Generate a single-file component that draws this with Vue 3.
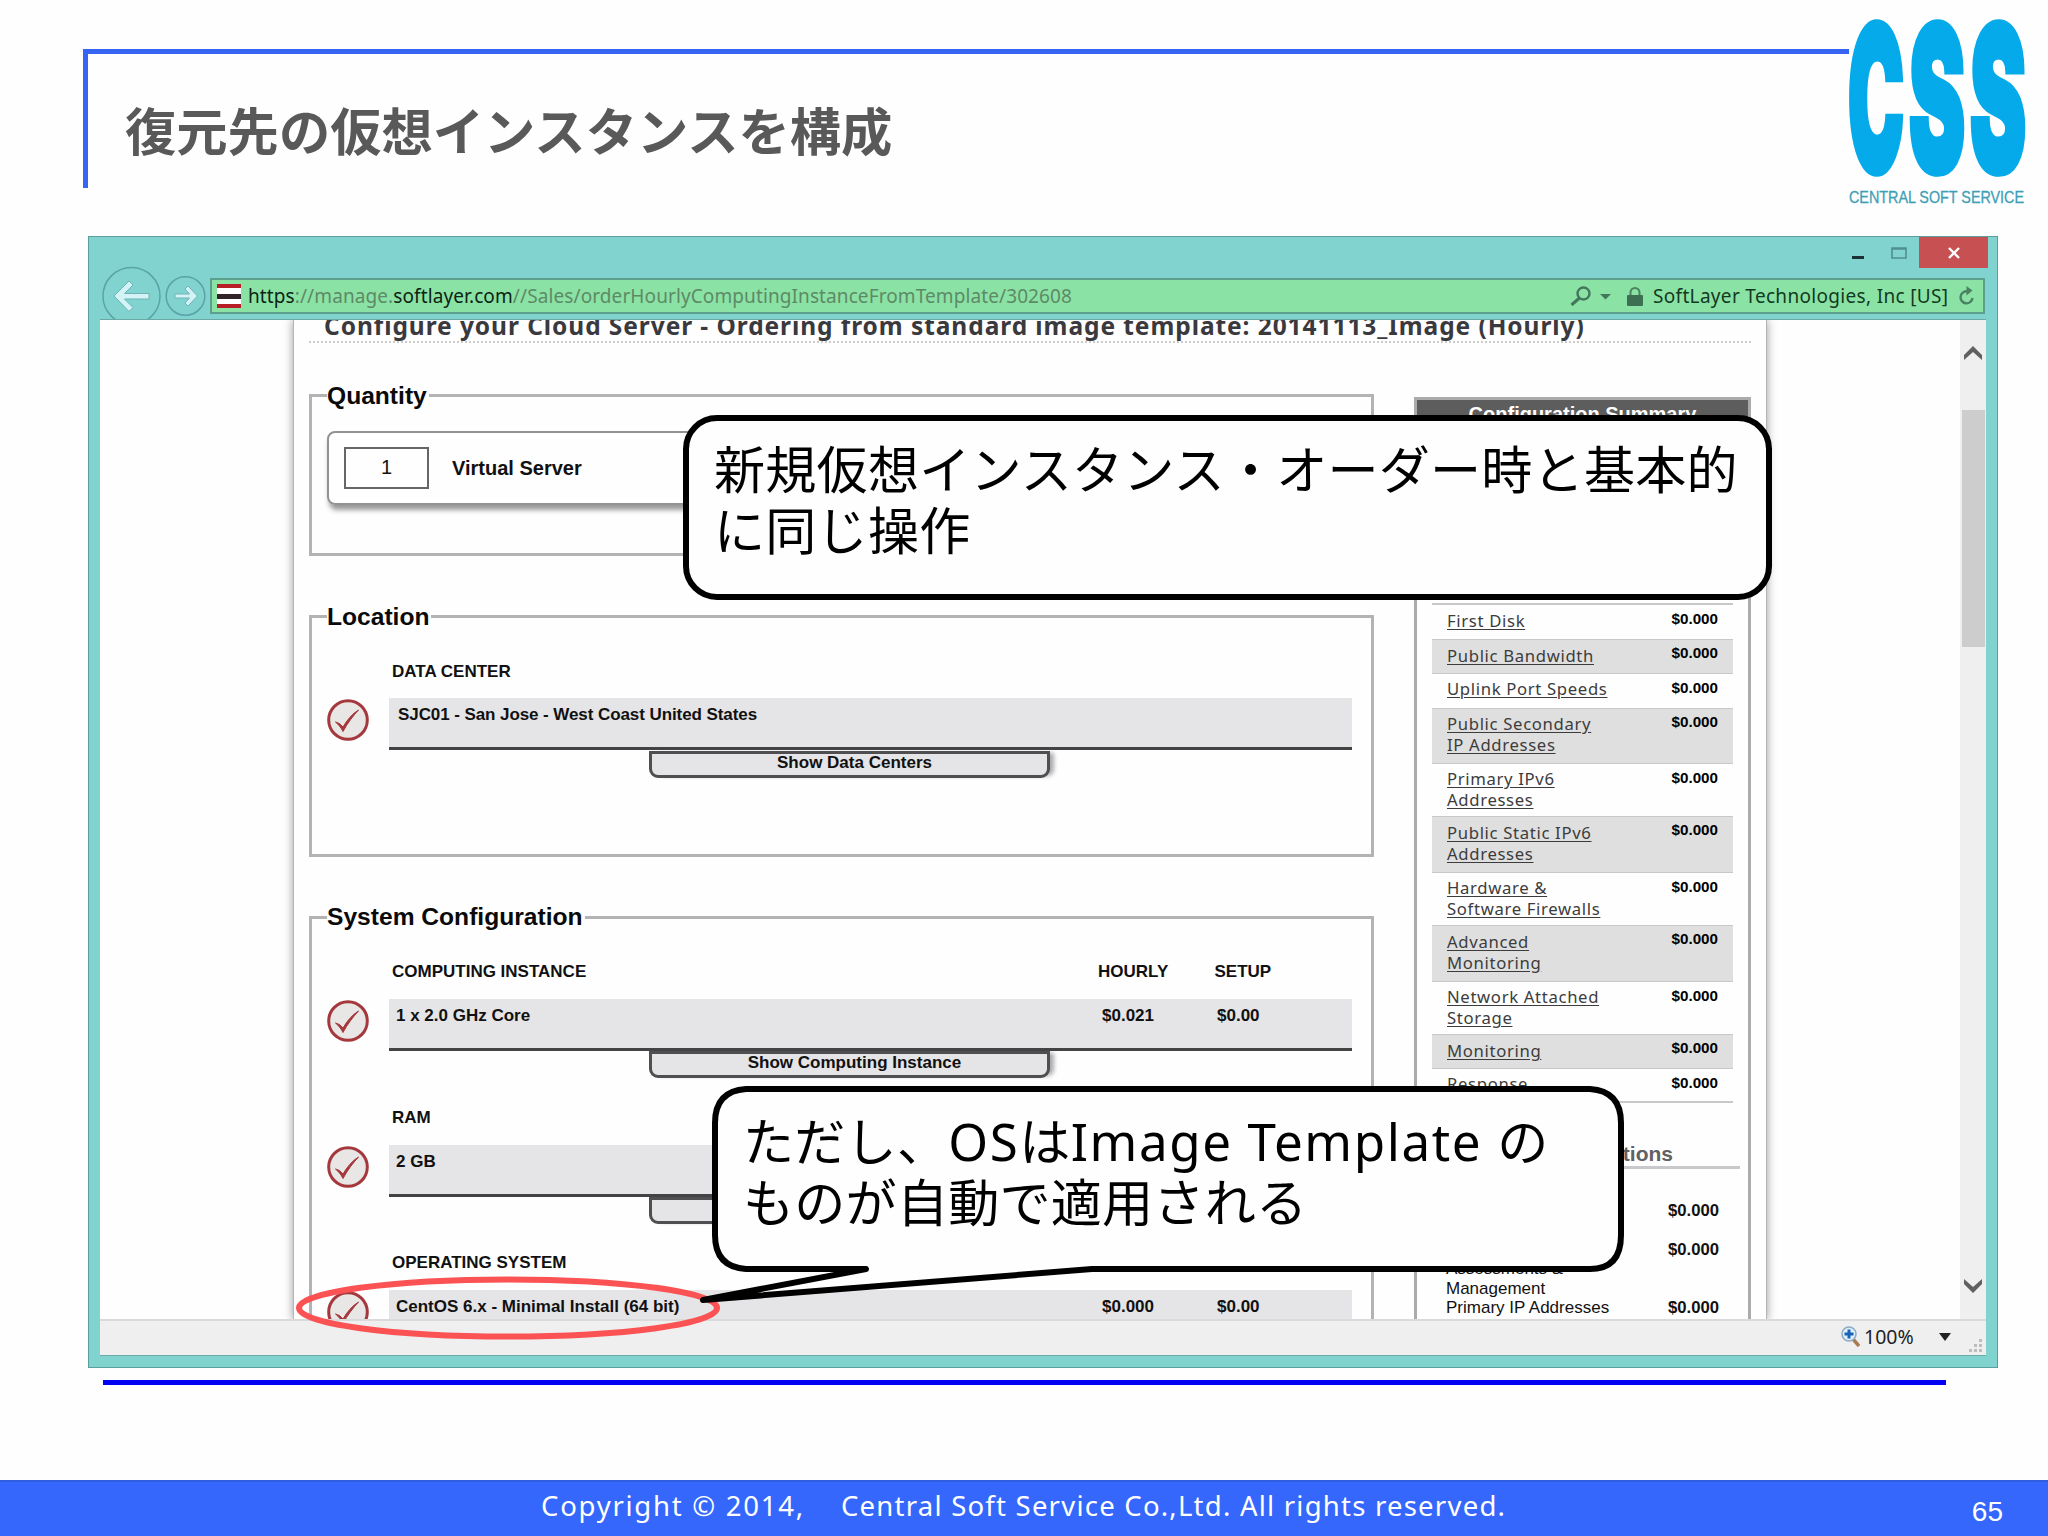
<template>
  <div class="slide">
    <header class="slide-head">
      <h1>復元先の仮想インスタンスを構成</h1>
    </header>

    <svg class="logo" viewBox="0 0 175 190" width="175" height="190">
      <g class="logo-letters" transform="scale(1 1.93)">
        <text x="-1" y="79" textLength="56" lengthAdjust="spacingAndGlyphs">C</text>
        <text x="60" y="79" textLength="56" lengthAdjust="spacingAndGlyphs">S</text>
        <text x="121" y="79" textLength="56" lengthAdjust="spacingAndGlyphs">S</text>
      </g>
      <text class="logo-name" x="0" y="184" textLength="175" lengthAdjust="spacingAndGlyphs">CENTRAL SOFT SERVICE</text>
    </svg>

    <main class="window">
      <div class="titlebar">
        <svg class="win-btn" viewBox="0 0 12 12" width="12" height="12"><path d="M0 10.5h12" stroke="#1d3034" stroke-width="3" /></svg>
        <svg class="win-btn max" viewBox="0 0 16 12" width="16" height="12"><path d="M1 1h14v10H1zM1 2h14" fill="none" stroke="#4f8f91" stroke-width="1.6" /></svg>
        <div class="close">
          <svg viewBox="0 0 12 12" width="12" height="12"><path d="M1 1l10 10M11 1L1 11" stroke="#fff" stroke-width="2.4" /></svg>
        </div>
      </div>

      <div class="navbar">
        <svg class="nav-icons" viewBox="0 0 104 53" width="104" height="53">
          <g fill="none" stroke="#5ba3a6" stroke-width="1.5">
            <circle cx="29.5" cy="30" r="28.5" />
            <circle cx="83.5" cy="30" r="19.3" />
          </g>
          <path d="M12 30l15-15 4 4-8.500 8.500h24.500v5.500H22.500l8.500 8.500-4 4z" fill="#d3f3f6" stroke="#6fb3b8" />
          <path d="M95.500 30l-9.500-10-3 3 4.500 5H73v4h14.500l-4.500 5 3 3z" fill="#d3f3f6" stroke="#6fb3b8" />
        </svg>
        <div class="address">
          <div class="favicon"></div>
          <div class="url"><b>https</b>://manage.<b>softlayer.com</b>//Sales/orderHourlyComputingInstanceFromTemplate/302608</div>
          <svg class="search" viewBox="0 0 42 20" width="42" height="20">
            <circle cx="13.500" cy="7.500" r="6" fill="none" stroke="#43765a" stroke-width="2.400" />
            <path d="M9.500 12L1.500 19" stroke="#43765a" stroke-width="3" />
            <path d="M30 8h11l-5.500 5.500z" fill="#43765a" />
          </svg>
          <svg class="lock" viewBox="0 0 16 19" width="16" height="19">
            <path d="M3.500 9V5.500a4.500 4.500 0 0 1 9 0V9" fill="none" stroke="#4b8261" stroke-width="2" />
            <rect y="8" width="16" height="11" rx="1" fill="#3d7052" />
          </svg>
          <span class="owner">SoftLayer Technologies, Inc [US]</span>
          <svg class="reload" viewBox="0 0 17 20" width="17" height="20">
            <path d="M10 5.500A6 6 0 1 0 14.500 12" fill="none" stroke="#4b8261" stroke-width="2.400" />
            <path d="M8.500 0l6 4.500-6 5z" fill="#4b8261" />
          </svg>
        </div>
      </div>

      <div class="viewport">
        <div class="page">
          <h2>Configure your Cloud Server - Ordering from standard image template: 20141113_Image (Hourly)</h2>
          <div class="columns">
            <div class="form">
              <section class="box quantity">
                <h3>Quantity</h3>
                <div class="quantity-card">
                  <div class="quantity-input">1</div>
                  <span>Virtual Server</span>
                </div>
              </section>

              <section v-for="box in boxes" :key="box.title" :class="['box', box.cls]">
                <h3>{{ box.title }}</h3>
                <div v-for="item in box.items" :key="item.label" class="group">
                  <div class="group-head">
                    <span>{{ item.label }}</span>
                    <span>{{ item.head && "HOURLY" }}</span>
                    <span>{{ item.head && "SETUP" }}</span>
                  </div>
                  <div class="group-row">
                    <svg viewBox="0 0 42 42" width="42" height="42">
                      <circle cx="21" cy="21" r="19.300" fill="#e9e6e6" stroke="#a5383c" stroke-width="3" />
                      <path d="M8.500 23l4 1.500 3.500 3.500C20 21 25 15 31.500 11 26 17 20.500 24 16 32.500 14 28.500 11.500 25.500 8.500 23z" fill="#a5383c" stroke="#a5383c" />
                    </svg>
                    <div class="bar">
                      <span>{{ item.value }}</span>
                      <span>{{ item.hourly }}</span>
                      <span>{{ item.setup }}</span>
                    </div>
                  </div>
                  <div class="show-btn">{{ item.button }}</div>
                </div>
              </section>
            </div>

            <aside class="summary">
              <div class="summary-title">Configuration Summary</div>
              <div class="summary-table">
                <div
                  v-for="(row, i) in rows"
                  :key="row[0]"
                  :class="['summary-row', { shaded: i % 2 === 1, two: row.length > 1 }]"
                >
                  <a><template v-for="(line, n) in row" :key="n"><br v-if="n" />{{ line }}</template></a>
                  <b>$0.000</b>
                </div>
              </div>
              <div class="options-title">tions</div>
              <div class="option-row first"><span></span><b>$0.000</b></div>
              <div class="option-row"><span><br />Assessments &amp;<br />Management</span><b>$0.000</b></div>
              <div class="option-row"><span>Primary IP Addresses</span><b>$0.000</b></div>
            </aside>
          </div>
        </div>
        <div class="scrollbar">
          <svg viewBox="0 0 18 14" width="18" height="14"><path d="M0 9l9-9 9 9v5L9 6 0 14z" fill="#606060" /></svg>
          <div class="thumb"></div>
          <svg class="down" viewBox="0 0 18 14" width="18" height="14"><path d="M0 5l9 9 9-9V0L9 8 0 0z" fill="#606060" /></svg>
        </div>
      </div>

      <div class="statusbar">
        <svg viewBox="0 0 19 21" width="19" height="21">
          <path d="M12 13l6 7" stroke="#a87b50" stroke-width="3.500" />
          <circle cx="8" cy="8" r="7" fill="#dff0fb" stroke="#8fabc4" stroke-width="1.600" />
          <path d="M8 3.500v9M3.500 8h9" stroke="#1663b8" stroke-width="3" />
        </svg>
        <span>100%</span>
        <svg class="caret" viewBox="0 0 12 8" width="12" height="8"><path d="M0 0h12L6 8z" fill="#222" /></svg>
        <svg class="grip" viewBox="0 0 13 13" width="13" height="13">
          <path d="M10 0h3v3h-3zM5 5h3v3H5zM10 5h3v3h-3zM0 10h3v3H0zM5 10h3v3H5zM10 10h3v3h-3z" fill="#bdbdbd" />
        </svg>
      </div>
    </main>

    <div class="rule"></div>

    <!-- annotations lying over the browser window -->
    <svg class="marks" viewBox="0 0 2048 1536" width="2048" height="1536">
      <ellipse cx="508" cy="1308" rx="209" ry="28.500" fill="none" stroke="#fb5254" stroke-width="6" />
      <path
        d="M746 1089H1590Q1621 1091 1621 1123V1235Q1621 1269 1590 1269H1092L703 1300 866 1269H746Q715 1267 715 1235V1123Q715 1091 746 1089Z"
        fill="#fefefe"
        stroke="#000"
        stroke-width="6"
        stroke-linejoin="round"
      />
    </svg>
    <div class="note first">新規仮想インスタンス・オーダー時と基本的<br />に同じ操作</div>
    <div class="note second">ただし、<i>OS</i>は<i>Image Template </i>の<br />ものが自動で適用される</div>

    <footer>
      <span class="copy">Copyright © 2014,</span>
      <span class="company">Central Soft Service Co.,Ltd. All rights reserved.</span>
      <span class="page-no">65</span>
    </footer>
  </div>
</template>

<script setup>
const boxes = [
  {
    title: "Location",
    cls: "location",
    items: [
      {
        label: "DATA CENTER",
        value: "SJC01 - San Jose - West Coast United States",
        button: "Show Data Centers",
      },
    ],
  },
  {
    title: "System Configuration",
    cls: "system",
    items: [
      {
        label: "COMPUTING INSTANCE",
        head: true,
        value: "1 x 2.0 GHz Core",
        hourly: "$0.021",
        setup: "$0.00",
        button: "Show Computing Instance",
      },
      { label: "RAM", value: "2 GB" },
      {
        label: "OPERATING SYSTEM",
        value: "CentOS 6.x - Minimal Install (64 bit)",
        hourly: "$0.000",
        setup: "$0.00",
      },
    ],
  },
];

// 每个数组元素是一行文字
const rows = [
  ["First Disk"],
  ["Public Bandwidth"],
  ["Uplink Port Speeds"],
  ["Public Secondary", "IP Addresses"],
  ["Primary IPv6", "Addresses"],
  ["Public Static IPv6", "Addresses"],
  ["Hardware &", "Software Firewalls"],
  ["Advanced", "Monitoring"],
  ["Network Attached", "Storage"],
  ["Monitoring"],
  ["Response"],
];
</script>

<style>
body {
  margin: 0;
  background: #fefefe;
}
</style>

<style scoped>
.slide {
  position: relative;
  display: flex;
  flex-direction: column;
  width: 2048px;
  height: 1536px;
  overflow: hidden;
  background: #fefefe;
  font-family: "Liberation Sans", "Noto Sans CJK JP", sans-serif;
  color: #111;
}

.slide * {
  box-sizing: border-box;
}

h1,
h2,
h3 {
  margin: 0;
}

.slide-head {
  width: 1770px;
  height: 139px;
  margin: 49px 0 0 83px;
  padding: 43px 0 0 37px;
  border-top: 5px solid #3565f2;
  border-left: 5px solid #3565f2;
}

h1 {
  font: bold 51.3px/64px "Noto Sans CJK JP", sans-serif;
  color: #595959;
}

.logo {
  position: absolute;
  left: 1849px;
  top: 19px;
  overflow: visible;
  background: #fefefe;
}

.logo-letters text {
  font: 900 104px Inter, "Liberation Sans", sans-serif;
  fill: #04aaea;
  stroke: #04aaea;
  stroke-width: 4px;
}

.logo-name {
  font: 17px "Liberation Sans", sans-serif;
  fill: #3d9fb6;
  stroke: #3d9fb6;
  stroke-width: 0.300px;
}

.window {
  width: 1910px;
  height: 1132px;
  margin: 48px 0 0 88px;
  border: 1px solid #5a9f9c;
  background: #81d3d0;
}

.titlebar {
  display: flex;
  justify-content: flex-end;
  height: 41px;
  padding-right: 9px;
}

.win-btn {
  margin: 10px 27px 0 0;
}

.max {
  margin-right: 12px;
}

.close {
  display: flex;
  align-items: center;
  justify-content: center;
  width: 69px;
  height: 31px;
  background: #c75052;
}

.navbar {
  display: flex;
  height: 41px;
}

.nav-icons {
  margin: -12px 0 0 12.500px;
}

.address {
  display: flex;
  align-items: center;
  width: 1775px;
  height: 36px;
  margin-left: 4.500px;
  padding-left: 5px;
  border: 2px solid #5c9f8d;
  background: #8be2a5;
  font-family: "Noto Sans", sans-serif;
}

.favicon {
  width: 24px;
  height: 24px;
  background: linear-gradient(#b81e25 0 4px, #fff 4px 10px, #33232a 10px 15px, #fff 15px 20px, #b81e25 20px);
}

.url {
  width: 1329px;
  padding-left: 7px;
  font-size: 19px;
  letter-spacing: 0.100px;
  color: #5d8a66;
}

.url b {
  font-weight: normal;
  color: #0c2413;
}

.lock {
  margin-left: 15px;
}

.owner {
  width: 315px;
  padding-left: 10px;
  font-size: 19px;
  letter-spacing: 0.320px;
  white-space: nowrap;
  color: #123a1d;
}

.viewport {
  display: flex;
  width: 1886px;
  height: 1000px;
  margin-left: 11px;
  overflow: hidden;
  background: #fefefe;
  border-top: 1px solid #6aa9a6;
}

.page {
  flex: none;
  width: 1474px;
  height: 1000px;
  margin-left: 193px;
  padding-left: 15px;
  background: #fefefe;
  border: solid #b5b5b5;
  border-width: 0 1px;
  box-shadow: 0 0 9px #999;
}

h2 {
  width: 1442px;
  margin-top: -9px;
  padding-left: 15px;
  border-bottom: 2px dotted #ccc;
  font: bold 24.500px/30px "Noto Sans", sans-serif;
  letter-spacing: 0.930px;
  white-space: nowrap;
  color: #3a393d;
}

.columns {
  display: flex;
  margin-top: 51px;
}

.box {
  width: 1065px;
  padding-left: 15px;
  margin-bottom: 59px;
  border: 3px solid #b3b3b3;
}

.quantity {
  height: 162px;
}

.location {
  height: 242px;
}

.system {
  height: 560px;
}

h3 {
  width: fit-content;
  margin: -15px 0 0 0;
  padding-right: 2px;
  background: #fefefe;
  font-size: 24.600px;
  line-height: 28px;
  color: #0a0a0a;
}

.quantity-card {
  display: flex;
  align-items: center;
  width: 1025px;
  height: 74px;
  margin-top: 21px;
  padding-left: 15px;
  border: 2px solid #929292;
  border-radius: 8px;
  box-shadow: 2px 5px 5px #999;
  font-weight: bold;
  font-size: 20px;
}

.quantity-input {
  width: 85px;
  height: 42px;
  margin-right: 23px;
  border: 2px solid #666;
  font-weight: normal;
  font-size: 20px;
  line-height: 37px;
  text-align: center;
}

.group {
  height: 145.500px;
  font-weight: bold;
  font-size: 17px;
  line-height: 20px;
}

.location .group {
  margin-top: 31px;
}

.system h3 {
  margin-top: -16px;
}

.system h3 + .group {
  margin-top: 31px;
}

.group-head,
.bar {
  display: grid;
  grid-template-columns: 706px 116.500px 1fr;
}

.group-head {
  height: 37px;
  padding-left: 65px;
}

.location .group-head {
  height: 36px;
}

.group-row {
  display: flex;
  gap: 20px;
  align-items: center;
}

.group-row svg {
  flex: none;
  margin-top: -8px;
}

.bar {
  width: 963px;
  height: 52px;
  padding: 7px 0 0 7px;
  grid-template-columns: 706px 115px 1fr;
  border-bottom: 3px solid #444245;
  background: #e5e4e6;
}

.location .bar {
  padding-left: 9px;
  letter-spacing: -0.080px;
}

.show-btn {
  width: 401px;
  height: 27px;
  margin: 0 0 0 322px;
  padding-left: 10px;
  border: 3px solid #4f4e51;
  border-radius: 0 0 9px 9px;
  background: #e5e4e6;
  box-shadow: 6px 0 4px -2px #aaa;
  text-align: center;
  line-height: 17px;
}

.location .show-btn {
  margin-top: 1px;
}

.summary {
  width: 337px;
  height: 1000px;
  margin: 3px 0 0 40px;
  border: 3px solid #ababab;
}

.summary-title {
  height: 30px;
  background: #5d5d5d;
  color: #fff;
  font-weight: bold;
  font-size: 20px;
  line-height: 29px;
  text-align: center;
}

.summary-table {
  width: 301px;
  margin: 173px 0 0 15px;
  border-top: 2px solid #c8c8c8;
  border-bottom: 2px solid #c8c8c8;
}

.summary-row {
  display: flex;
  justify-content: space-between;
  height: 34px;
  padding: 4px 15px 0;
  font: 16.700px/20.600px "Noto Sans", sans-serif;
  letter-spacing: 0.660px;
  color: #3c3c3c;
}

.summary-row:last-child {
  height: 32px;
}

.summary-row a {
  padding-top: 1.500px;
  text-decoration: underline;
  text-underline-offset: 2px;
}

.summary-row b {
  font: bold 15.200px/20px "Liberation Sans", sans-serif;
  letter-spacing: 0;
  color: #000;
}

.summary-row.two {
  height: 52.600px;
}

.summary-row.shaded {
  height: 34.500px;
  border: solid #c8c8c8;
  border-width: 1px 0;
  background: #dfdfdf;
}

.summary-row.shaded.two {
  height: 56.400px;
}

.summary-row.shaded b {
  margin-top: -1px;
}

.options-title {
  width: 315px;
  height: 26px;
  margin: 40px 0 0 8px;
  padding-right: 67px;
  border-bottom: 3px solid #c9c8ca;
  font-weight: bold;
  font-size: 21px;
  line-height: 22px;
  text-align: right;
  color: #616064;
}

.option-row {
  display: flex;
  justify-content: space-between;
  padding: 0 29px 0 29px;
  font-size: 17px;
  line-height: 19.500px;
}

.option-row b {
  font-size: 16.700px;
}

.option-row.first {
  height: 39px;
  margin-top: 32px;
}

.scrollbar {
  display: flex;
  flex-direction: column;
  align-items: center;
  width: 26px;
  height: 1000px;
  margin-left: auto;
  padding-top: 26px;
  background: #efeff0;
}

.thumb {
  width: 23px;
  height: 237px;
  margin-top: 50px;
  background: #cdcdcd;
}

.down {
  margin-top: auto;
  margin-bottom: 27px;
}

.statusbar {
  display: flex;
  align-items: center;
  justify-content: flex-end;
  width: 1886px;
  height: 37px;
  margin-left: 11px;
  padding: 0 4px 3px 0;
  border-top: 2px solid #dadada;
  border-bottom: 1px solid #6aa9a6;
  background: #f0eff0;
  font: 19.500px "Noto Sans", sans-serif;
}

.statusbar span {
  width: 79px;
  padding-left: 4px;
  color: #222;
}

.grip {
  margin: 18px 0 0 18px;
}

.rule {
  width: 1843px;
  height: 5px;
  margin: 12px 0 0 103px;
  background: #0202f2;
}

.marks {
  position: absolute;
  left: 0;
  top: 0;
}

.note {
  position: absolute;
  font: 51.100px/61.400px "Noto Sans", "Noto Sans CJK JP", sans-serif;
  letter-spacing: 0.200px;
  white-space: nowrap;
  color: #000;
}

.note.first {
  left: 683px;
  top: 415px;
  width: 1089px;
  height: 185px;
  padding: 18px 0 0 25px;
  border: 6px solid #000;
  border-radius: 34px;
  background: #fefefe;
}

.note.second {
  left: 743px;
  top: 1111px;
}

.note i {
  font-style: normal;
  letter-spacing: 1.600px;
}

footer {
  display: flex;
  height: 56px;
  margin-top: auto;
  padding-left: 541px;
  border-top: 2px solid #2f5ee0;
  background: #3567fd;
  font: 27.500px/48px "Noto Sans", sans-serif;
  letter-spacing: 1.230px;
  white-space: nowrap;
  color: #fff;
}

.copy {
  width: 300px;
  letter-spacing: 1.750px;
}

.page-no {
  margin-left: auto;
  padding-right: 45px;
  font: 28px/60px "Liberation Sans", sans-serif;
  letter-spacing: 0;
}
</style>
